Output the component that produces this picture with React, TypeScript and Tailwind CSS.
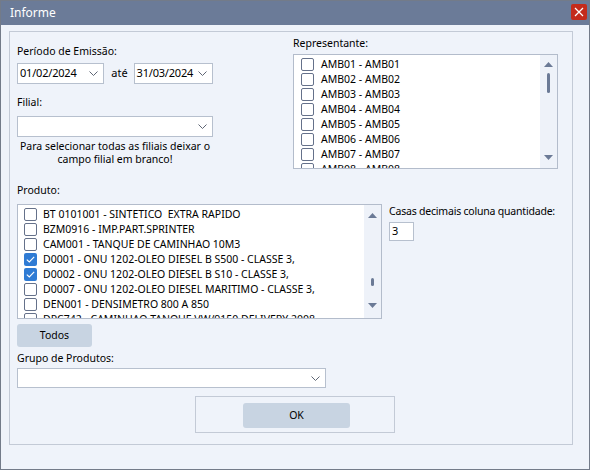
import { ReactNode } from "react"

const representantes = ["AMB01", "AMB02", "AMB03", "AMB04", "AMB05", "AMB06", "AMB07", "AMB08"]

const produtos = [
  { label: "BT 0101001 - SINTETICO  EXTRA RAPIDO", checked: false },
  { label: "BZM0916 - IMP.PART.SPRINTER", checked: false },
  { label: "CAM001 - TANQUE DE CAMINHAO 10M3", checked: false },
  { label: "D0001 - ONU 1202-OLEO DIESEL B S500 - CLASSE 3,", checked: true },
  { label: "D0002 - ONU 1202-OLEO DIESEL B S10 - CLASSE 3,", checked: true },
  { label: "D0007 - ONU 1202-OLEO DIESEL MARITIMO - CLASSE 3,", checked: false },
  { label: "DEN001 - DENSIMETRO 800 A 850", checked: false },
  { label: "DPC742 - CAMINHAO TANQUE VW/9150 DELIVERY 2008", checked: false },
]

const Chevron = () => (
  <svg width="9" height="5" viewBox="0 0 9 5">
    <path d="M0.5 0.5 L4.5 4.5 L8.5 0.5" fill="none" stroke="#5f6675" strokeWidth="1" />
  </svg>
)

const Combo = ({ value, className }: { value?: string; className: string }) => (
  <div className={`flex items-center justify-between border border-[#b7c0ce] bg-white pl-[2px] pr-[5px] text-[11px] tracking-[-0.2px] ${className}`}>
    <span>{value}</span>
    <Chevron />
  </div>
)

const Checkbox = ({ checked }: { checked?: boolean }) =>
  checked ? (
    <span className="flex h-[13px] w-[13px] shrink-0 items-center justify-center rounded-[2px] bg-[#2f7bd4]">
      <svg width="9" height="7" viewBox="0 0 9 7">
        <path d="M0.8 3.6 L3.3 6 L8.2 0.8" fill="none" stroke="white" strokeWidth="1.1" />
      </svg>
    </span>
  ) : (
    <span className="h-[13px] w-[13px] shrink-0 rounded-[2px] border border-[#65718a] bg-white" />
  )

const ArrowUp = () => (
  <svg width="9" height="5" viewBox="0 0 9 5">
    <path d="M0 5 L4.5 0 L9 5 Z" fill="#6b7a96" />
  </svg>
)

const ArrowDown = () => (
  <svg width="9" height="5" viewBox="0 0 9 5">
    <path d="M0 0 L4.5 5 L9 0 Z" fill="#6b7a96" />
  </svg>
)

const ListBox = ({ children, className, scroll }: { children: ReactNode; className: string; scroll: ReactNode }) => (
  <div className={`flex border border-[#b3bccb] bg-white ${className}`}>
    <div className="flex-1 overflow-hidden pt-[2px]">{children}</div>
    {scroll}
  </div>
)

export default function App() {
  return (
    <div className="flex h-[470px] w-[590px] flex-col overflow-hidden border border-[#737b89] bg-[#eff3fa] font-['Noto_Sans',sans-serif] text-[10.5px] text-black">
      {/* title bar */}
      <div className="flex h-[24px] shrink-0 items-center justify-between bg-[#6b7b98] pl-[9px] pr-[2px]">
        <span className="text-[12px] text-white">Informe</span>
        <button className="mt-[-3px] flex h-[16px] w-[16px] items-center justify-center rounded-[2px] bg-[#c42b1c]">
          <svg width="10" height="10" viewBox="0 0 10 10">
            <path d="M1 1 L9 9 M9 1 L1 9" stroke="white" strokeWidth="1.2" />
          </svg>
        </button>
      </div>

      <div className="flex-1 pb-[24px] pl-[8px] pr-[16px] pt-[6px]">
        <div className="flex h-full flex-col border border-[#c3cad6] pl-[7px]">
          {/* top row */}
          <div className="flex pt-[4px]">
            <div className="mt-[8px] w-[196px]">
              <div className="leading-[15px]">Período de Emissão:</div>
              <div className="mt-[4px] flex items-center">
                <Combo value="01/02/2024" className="h-[21px] w-[89px]" />
                <span className="ml-[7px] mr-[6px] text-[11px]">até</span>
                <Combo value="31/03/2024" className="h-[21px] w-[81px]" />
              </div>
              <div className="mt-[11px] leading-[15px]">Filial:</div>
              <Combo className="mt-[6px] h-[21px] w-[196px]" />
              <div className="mt-[3px] text-center leading-[12.5px]">
                Para selecionar todas as filiais deixar o
                <br />
                campo filial em branco!
              </div>
            </div>

            <div className="ml-[80px] w-[265px]">
              <div className="leading-[15px]">Representante:</div>
              <ListBox
                className="mt-[3px] h-[115px]"
                scroll={
                  <div className="flex w-[17px] flex-col items-center bg-[#eef2f9] pb-[8px] pt-[7px]">
                    <ArrowUp />
                    <div className="mt-[6px] h-[20px] w-[3px] rounded-full bg-[#6b7a96]" />
                    <div className="flex-1" />
                    <ArrowDown />
                  </div>
                }
              >
                {representantes.map((r) => (
                  <div key={r} className="flex h-[15px] items-center pl-[7px]">
                    <Checkbox />
                    <span className="ml-[7px]">
                      {r} - {r}
                    </span>
                  </div>
                ))}
              </ListBox>
            </div>
          </div>

          {/* produto */}
          <div className="mt-[14px] leading-[15px]">Produto:</div>
          <div className="mt-[6px] flex items-start">
            <ListBox
              className="h-[115px] w-[365px]"
              scroll={
                <div className="flex w-[17px] flex-col items-center bg-[#eef2f9] pb-[10px] pt-[8px]">
                  <ArrowUp />
                  <div className="flex-1" />
                  <div className="h-[8px] w-[3px] rounded-full bg-[#6b7a96]" />
                  <div className="mt-[17px]">
                    <ArrowDown />
                  </div>
                </div>
              }
            >
              {produtos.map((p) => (
                <div key={p.label} className="flex h-[15px] items-center pl-[6px]">
                  <Checkbox checked={p.checked} />
                  <span className="ml-[6px] whitespace-pre">{p.label}</span>
                </div>
              ))}
            </ListBox>
            <div className="ml-[7px]">
              <div className="leading-[15px] tracking-[-0.2px]">Casas decimais coluna quantidade:</div>
              <div className="mt-[3px] flex h-[19px] w-[25px] items-center border border-[#b7c0ce] bg-white pl-[2px] text-[11px]">
                3
              </div>
            </div>
          </div>

          <button className="mt-[5px] h-[23px] w-[75px] rounded-[3px] bg-[#c8d4e2] text-[10.5px]">Todos</button>

          <div className="mt-[4px] leading-[15px]">Grupo de Produtos:</div>
          <Combo className="mt-[2px] h-[20px] w-[309px]" />

          <div className="ml-[178px] mt-[8px] h-[37px] w-[200px] border border-[#c3cad6] pl-[47px] pt-[6px]">
            <button className="h-[25px] w-[107px] rounded-[3px] bg-[#c8d4e2] text-[10.5px]">OK</button>
          </div>
        </div>
      </div>
    </div>
  )
}
